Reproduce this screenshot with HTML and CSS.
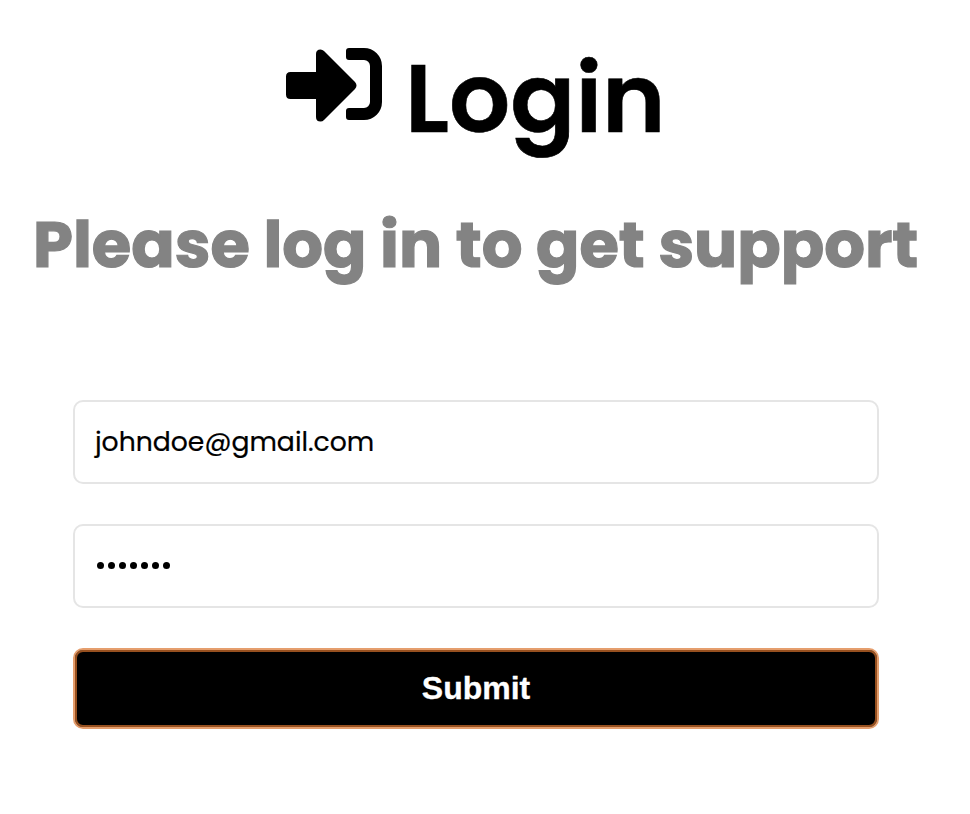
FILE: index.html
```
<!DOCTYPE html>
<html lang="en">
<head><meta charset="utf-8"><title>Login</title><link rel="stylesheet" href="styles.css"></head>
<body>
<main class="page">
  <header class="heading">
    <h1 class="title">
      <svg class="icon" viewBox="0 0 96 74" aria-hidden="true"><path d="M4.500 24H30V6Q30 1.500 34.500 1.500Q36.500 1.500 38 3L69 34Q72 37.500 69 41L38 72Q36.500 73.500 34.500 73.500Q30 73.500 30 69V51H4.500Q0 51 0 46.500V28.500Q0 24 4.500 24Z"/><path d="M63 0H78A18 18 0 0 1 96 18V54A18 18 0 0 1 78 72H63Q60 72 60 69V63Q60 60 63 60H78A6 6 0 0 0 84 54V18A6 6 0 0 0 78 12H63Q60 12 60 9V3Q60 0 63 0Z"/></svg>
      <span>Login</span>
    </h1>
    <h2 class="subtitle">Please log in to get support</h2>
  </header>
  <form class="form">
    <div class="field email">johndoe@gmail.com</div>
    <div class="field dots"><i></i><i></i><i></i><i></i><i></i><i></i><i></i></div>
    <button class="submit" type="button">Submit</button>
  </form>
</main>
</body>
</html>
```
FILE: styles.css
```
* { box-sizing: border-box; }
body { margin: 0; background: #fff; color: #000; font-family: Poppins, Inter, sans-serif; }
.heading { height: 400px; padding-top: 48px; }
.title { display: flex; height: 120px; margin: 0 0 0 286px; gap: 23px; font-size: 96px; font-weight: 600; line-height: 101px; -webkit-text-stroke: .6px #000; }
.icon { width: 96px; height: 74px; flex: none; }
.subtitle { margin: 27px 0 0 33px; font-size: 64px; font-weight: 700; line-height: 100px; white-space: nowrap; color: #838383; -webkit-text-stroke: 1.200px #838383; }
.form { width: 806px; margin-left: 73px; display: flex; flex-direction: column; gap: 40px; }
.field { height: 84px; border: 2px solid #e5e5e5; border-radius: 10px; padding: 0 20px; display: flex; align-items: center; }
.email { font-size: 26.667px; -webkit-text-stroke: .2px #000; }
.dots { gap: 4px; padding: 0 21.500px 1px; }
.dots i { width: 7px; height: 7px; border-radius: 50%; background: #000; }
.submit { height: 81px; border: 2px solid #e59e6d; border-radius: 10px; background: #000; box-shadow: inset 0 0 0 2px #97501f; color: #fff; font: bold 32px "Liberation Sans", sans-serif; padding: 0 0 1px; -webkit-text-stroke: .3px #fff; }
```
